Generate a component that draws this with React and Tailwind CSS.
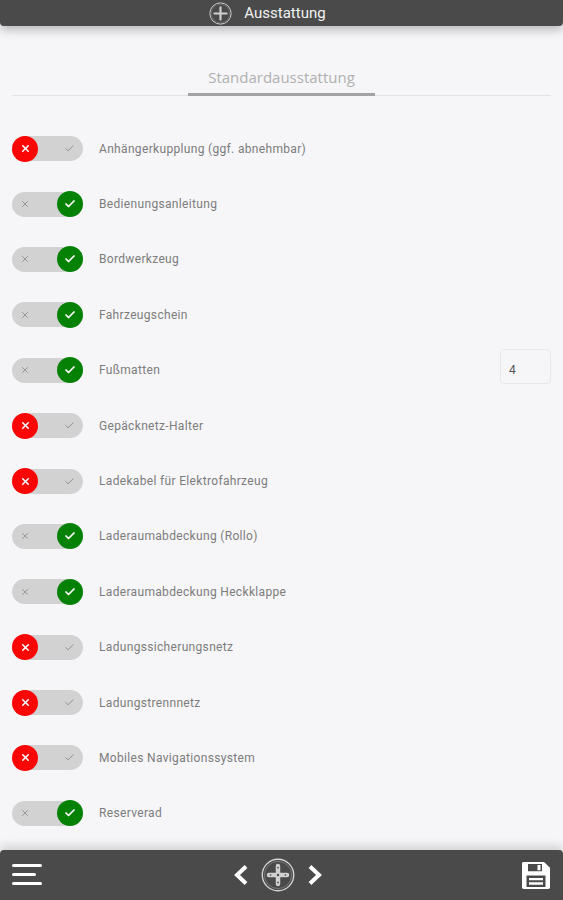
import { Check, X } from 'lucide-react';

const items = [
  { label: 'Anhängerkupplung (ggf. abnehmbar)', on: false },
  { label: 'Bedienungsanleitung', on: true },
  { label: 'Bordwerkzeug', on: true },
  { label: 'Fahrzeugschein', on: true },
  { label: 'Fußmatten', on: true, count: 4 },
  { label: 'Gepäcknetz-Halter', on: false },
  { label: 'Ladekabel für Elektrofahrzeug', on: false },
  { label: 'Laderaumabdeckung (Rollo)', on: true },
  { label: 'Laderaumabdeckung Heckklappe', on: true },
  { label: 'Ladungssicherungsnetz', on: false },
  { label: 'Ladungstrennnetz', on: false },
  { label: 'Mobiles Navigationssystem', on: false },
  { label: 'Reserverad', on: true },
];

function WheelIcon({ size, detail }) {
  return (
    <svg width={size} height={size} viewBox="0 0 32 32" fill="none" className="shrink-0">
      <circle cx="16" cy="16" r="14.8" stroke="#d4d4d4" strokeWidth="1.3" />
      <circle cx="16" cy="16" r="12.8" stroke="#8f8f8f" strokeWidth="0.6" />
      <path d="M16 7.5V24.5M7.5 16H24.5" stroke="#d0d0d0" strokeWidth={detail ? 4.2 : 3} strokeLinecap="round" />
      {detail && (
        <g fill="#4a4a4a">
          <circle cx="16" cy="16" r="1.1" />
          <circle cx="16" cy="9" r="0.8" />
          <circle cx="16" cy="23" r="0.8" />
          <circle cx="9" cy="16" r="0.8" />
          <circle cx="23" cy="16" r="0.8" />
        </g>
      )}
    </svg>
  );
}

function Toggle({ on }) {
  return (
    <div className="relative flex h-[25px] w-[71px] shrink-0 items-center justify-between rounded-full bg-[#d2d2d3] px-[8px]">
      <X className="h-[10px] w-[10px] text-[#8a8a8a]" strokeWidth={2} />
      <Check className="h-[11px] w-[11px] text-[#8a8a8a]" strokeWidth={2} />
      {on ? (
        <div className="absolute right-0 top-[-0.5px] flex h-[26px] w-[26px] items-center justify-center rounded-full bg-[#058205]">
          <Check className="h-[12px] w-[12px] text-white" strokeWidth={3.5} />
        </div>
      ) : (
        <div className="absolute left-0 top-[-0.5px] flex h-[26px] w-[26px] items-center justify-center rounded-full bg-[#fb0505]">
          <X className="h-[11px] w-[11px] text-white" strokeWidth={3.5} />
        </div>
      )}
    </div>
  );
}

export default function App() {
  return (
    <div className="flex h-[900px] w-full flex-col overflow-hidden bg-[#f6f6f8] font-['Roboto',sans-serif]">
      {/* Top bar */}
      <div className="flex h-[26px] shrink-0 items-center justify-center gap-[12px] rounded-b-[4px] bg-[#4a4a4a] pr-[28px] shadow-[0_4px_10px_rgba(0,0,0,0.25)]">
        <WheelIcon size={23} />
        <span className="text-[15px] text-[#f2f2f2]">Ausstattung</span>
      </div>

      {/* Tabs */}
      <div className="mx-[12px] mt-[39px] flex h-[31px] shrink-0 justify-center border-b border-[#e3e3e5]">
        <div className="h-[31px] w-[187px] border-b-[3px] border-[#a3a3a3] text-center font-['Open_Sans',sans-serif] text-[15px] leading-[24px] text-[#b0b0b0]">
          Standardausstattung
        </div>
      </div>

      {/* Equipment rows */}
      <div className="mt-[25px] flex-1 px-[12px]">
        {items.map((item) => (
          <div key={item.label} className="flex h-[55.4px] items-center">
            <Toggle on={item.on} />
            <span className="ml-[16px] flex-1 text-[12px] tracking-[0.33px] text-[#7c7c7c]">{item.label}</span>
            {item.count && (
              <div className="mb-[7px] flex h-[35px] w-[51px] items-center rounded-[4px] border border-[#e8e8ea] pl-[8px] pt-[6px] text-[12px] text-[#555555]">
                {item.count}
              </div>
            )}
          </div>
        ))}
      </div>

      {/* Bottom bar */}
      <div className="flex h-[50px] shrink-0 items-center justify-between rounded-t-[4px] bg-[#4a4a4a] pl-[12px] pr-[13px] shadow-[0_-4px_10px_rgba(0,0,0,0.15)]">
        <div className="mb-[2px] flex w-[30px] flex-col items-start gap-[6px]">
          <div className="h-[3px] w-[30px] rounded-full bg-white" />
          <div className="h-[3px] w-[24px] rounded-full bg-white" />
          <div className="h-[3px] w-[30px] rounded-full bg-white" />
        </div>
        <div className="mr-[9px] flex items-center gap-[12px]">
          <svg width="16" height="22" viewBox="0 0 16 22" fill="none">
            <path d="M13 2.5L4 11L13 19.5" stroke="white" strokeWidth="4" />
          </svg>
          <WheelIcon size={34} detail />
          <svg width="16" height="22" viewBox="0 0 16 22" fill="none">
            <path d="M3 2.5L12 11L3 19.5" stroke="white" strokeWidth="4" />
          </svg>
        </div>
        <svg width="28" height="27" viewBox="0 0 28 28" preserveAspectRatio="none">
          <path
            fillRule="evenodd"
            fill="white"
            d="M1.5 0H22L28 6V26.5C28 27.3 27.3 28 26.5 28H1.5C.7 28 0 27.3 0 26.5V1.5C0 .7.7 0 1.5 0ZM6 2V9.5H20V2ZM15.5 3H18.5V8.5H15.5ZM4.5 14V26H23.5V14ZM7 16.5H21V19H7ZM7 21H21V23.5H7Z"
          />
        </svg>
      </div>
    </div>
  );
}
